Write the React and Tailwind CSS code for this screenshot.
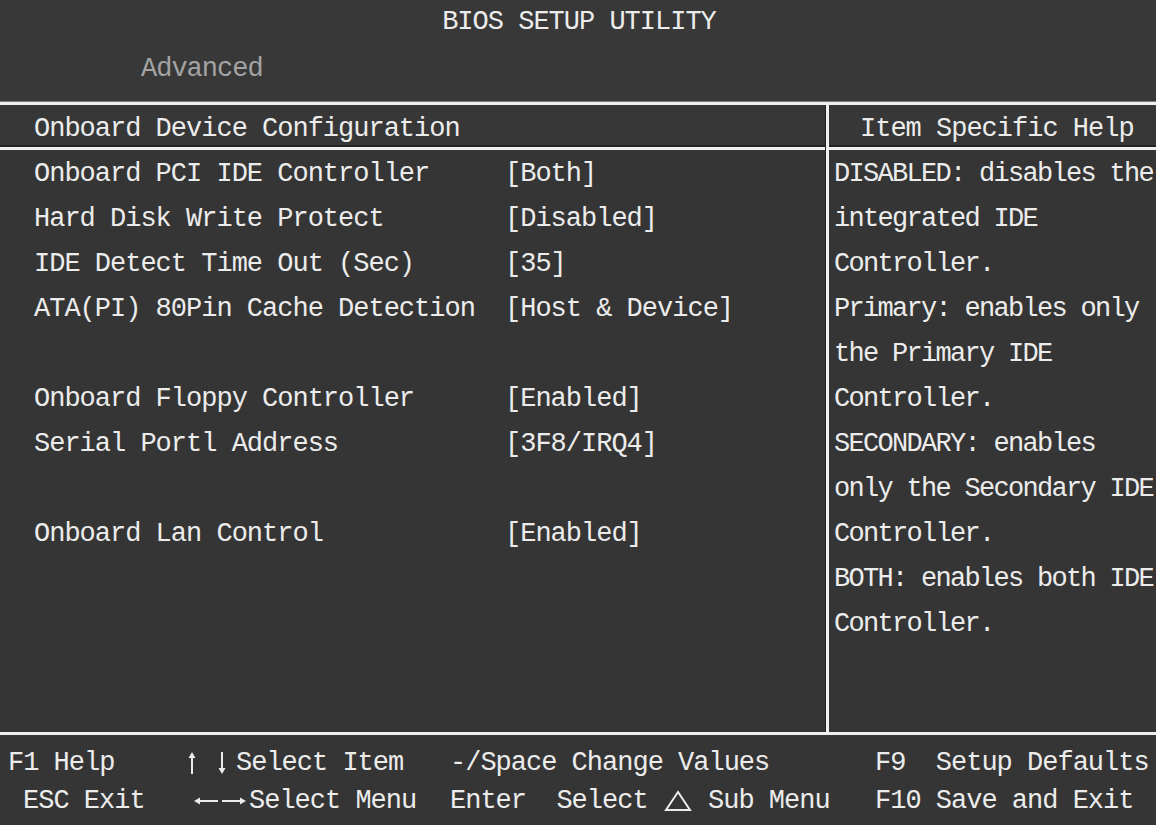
import React from "react";

const settings = [
  { label: "Onboard PCI IDE Controller", value: "[Both]" },
  { label: "Hard Disk Write Protect", value: "[Disabled]" },
  { label: "IDE Detect Time Out (Sec)", value: "[35]" },
  { label: "ATA(PI) 80Pin Cache Detection", value: "[Host & Device]" },
  null,
  { label: "Onboard Floppy Controller", value: "[Enabled]" },
  { label: "Serial Portl Address", value: "[3F8/IRQ4]" },
  null,
  { label: "Onboard Lan Control", value: "[Enabled]" },
];

const helpLines = [
  "DISABLED: disables the",
  "integrated IDE",
  "Controller.",
  "Primary: enables only",
  "the Primary IDE",
  "Controller.",
  "SECONDARY: enables",
  "only the Secondary IDE",
  "Controller.",
  "BOTH: enables both IDE",
  "Controller.",
];

const font = { fontFamily: '"Liberation Mono", "DejaVu Sans Mono", monospace' };

export default function App() {
  return (
    <div
      className="w-[1156px] h-[825px] bg-[#353535] text-[#ececec] text-[27px] tracking-[-1px] overflow-hidden flex flex-col"
      style={font}
    >
      {/* Title area */}
      <div className="h-[101px] bg-[#383838] pt-[2px]">
        <div className="leading-[40px] text-center pl-[2px]">BIOS SETUP UTILITY</div>
        <div className="leading-[40px] mt-[7px] pl-[141px] text-[#a3a3a3]">Advanced</div>
      </div>
      <div className="h-[1px] bg-[#7a7a7a]" />
      <div className="h-[3px] bg-[#f0f0f0]" />

      {/* Main panels */}
      <div className="flex h-[627px]">
        <div className="w-[825px] flex flex-col">
          <div className="h-[40px] leading-[40px] pt-[4px] pl-[34px] bg-[#373737]">
            Onboard Device Configuration
          </div>
          <div className="h-[2px] bg-[#222]" />
          <div className="h-[3px] bg-[#f0f0f0]" />
          <div className="flex-1 pt-[2px]">
            {settings.map((s, i) =>
              s ? (
                <div key={i} className="flex h-[45px] leading-[45px] whitespace-pre">
                  <span className="w-[505px] pl-[34px]">{s.label}</span>
                  <span>{s.value}</span>
                </div>
              ) : (
                <div key={i} className="h-[45px]" />
              )
            )}
          </div>
        </div>

        <div className="w-[4px] bg-[#f0f0f0] border-l border-[#222]" />

        <div className="flex-1 flex flex-col">
          <div className="h-[40px] leading-[40px] pt-[4px] pl-[31px] bg-[#373737]">
            Item Specific Help
          </div>
          <div className="h-[2px] bg-[#222]" />
          <div className="h-[3px] bg-[#f0f0f0]" />
          <div className="flex-1 pt-[2px] pl-[5px] tracking-[-1.7px]">
            {helpLines.map((l, i) => (
              <div key={i} className="h-[45px] leading-[45px] whitespace-pre">
                {l}
              </div>
            ))}
          </div>
        </div>
      </div>

      <div className="h-[3px] bg-[#f0f0f0]" />

      {/* Key legend */}
      <div className="flex-1 pt-[9px] whitespace-pre">
        <div className="grid grid-cols-[185px_265px_425px_1fr] leading-[38px]">
          <span className="pl-[8px]">F1 Help</span>
          <span className="flex items-center">
            <ArrowV up className="ml-[3px]" />
            <ArrowV className="ml-[22px]" />
            <span className="ml-[10px]">Select Item</span>
          </span>
          <span>-/Space Change Values</span>
          <span>F9  Setup Defaults</span>
        </div>
        <div className="grid grid-cols-[185px_265px_425px_1fr] leading-[38px]">
          <span className="pl-[23px]">ESC Exit</span>
          <span className="flex items-center">
            <ArrowH left className="ml-[8px]" />
            <ArrowH className="ml-[2px]" />
            <span className="ml-[2px]">Select Menu</span>
          </span>
          <span className="flex items-center">
            <span>Enter  Select </span>
            <Triangle />
            <span> Sub Menu</span>
          </span>
          <span>F10 Save and Exit</span>
        </div>
      </div>
    </div>
  );
}

/* ---------- key glyphs ---------- */

const ArrowV = ({ up, className = "" }) => (
  <svg width="8" height="24" viewBox="0 0 8 24" className={className}>
    {up ? (
      <path d="M4 1 L7.5 7 H5 V23 H3 V7 H0.5 Z" fill="#ececec" />
    ) : (
      <path d="M4 23 L7.5 17 H5 V1 H3 V17 H0.5 Z" fill="#ececec" />
    )}
  </svg>
);

const ArrowH = ({ left, className = "" }) => (
  <svg width="26" height="10" viewBox="0 0 26 10" className={className}>
    {left ? (
      <path d="M1 5 L7 1.5 V4 H25 V6 H7 V8.5 Z" fill="#ececec" />
    ) : (
      <path d="M25 5 L19 1.5 V4 H1 V6 H19 V8.5 Z" fill="#ececec" />
    )}
  </svg>
);

const Triangle = () => (
  <svg width="30" height="22" viewBox="0 0 30 22">
    <path d="M15 2 L27 20 H3 Z" fill="none" stroke="#ececec" strokeWidth="2" />
  </svg>
);
